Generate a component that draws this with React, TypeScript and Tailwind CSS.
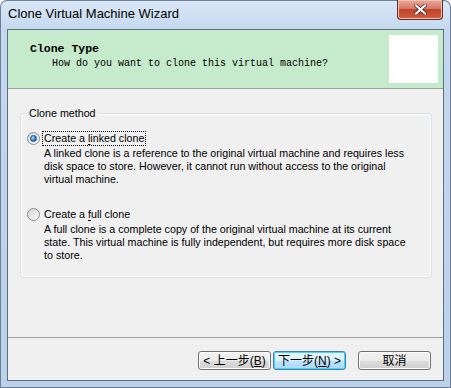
import React from 'react'

const ui = { fontFamily: '"Liberation Sans", "Noto Sans", sans-serif' }
const mono = { fontFamily: '"Liberation Mono", "DejaVu Sans Mono", monospace' }
const cjk = { fontFamily: '"Liberation Sans", "Noto Sans CJK SC", sans-serif' }

const Radio: React.FC<{ checked?: boolean }> = ({ checked }) => (
  <span className="relative flex h-[13px] w-[13px] shrink-0 items-center justify-center rounded-full border border-[#8e8f8f] bg-gradient-to-br from-[#d4d4d4] to-[#fbfbfb]">
    {checked && (
      <span className="h-[7px] w-[7px] rounded-full border border-[#1c4f8c] bg-[radial-gradient(circle_at_35%_35%,#b9e0ff,#2b77c9_60%,#1b4f91)]" />
    )}
  </span>
)

const Option: React.FC<{
  checked?: boolean
  focused?: boolean
  pre: string
  accel: string
  post: string
  lines: string[]
}> = ({ checked, focused, pre, accel, post, lines }) => (
  <div className="flex flex-col">
    <div className="flex items-center">
      <Radio checked={checked} />
      <span
        className={`ml-[2px] h-[15px] px-[1px] leading-[13px] ${
          focused ? 'border border-dotted border-black' : 'border border-transparent'
        }`}
      >
        {pre}
        <span className="underline underline-offset-2">{accel}</span>
        {post}
      </span>
    </div>
    <div className="ml-[17px] mt-[1px] flex flex-col leading-[13px]">
      {lines.map((l) => (
        <span key={l}>{l}</span>
      ))}
    </div>
  </div>
)

const Button: React.FC<{ children: React.ReactNode; primary?: boolean }> = ({
  children,
  primary,
}) => (
  <div
    className={`flex h-[19px] w-[73px] items-center justify-center rounded-[3px] border text-[12px] leading-none ${
      primary
        ? 'border-[#3c7fb1] bg-[linear-gradient(#eaf6fd_0%,#d9f0fc_50%,#bee6fd_50%,#a7d9f5_100%)] shadow-[inset_0_0_0_1px_#48d3fb]'
        : 'border-[#707070] bg-[linear-gradient(#f2f2f2_0%,#ebebeb_50%,#dddddd_50%,#cfcfcf_100%)] shadow-[inset_0_0_0_1px_#fcfcfc]'
    }`}
    style={cjk}
  >
    {children}
  </div>
)

export default function App() {
  return (
    <div
      className="flex h-[388px] w-[451px] flex-col rounded-t-[7px] bg-[linear-gradient(180deg,#dbe8f6_0px,#c4d8ef_30px,#b9d1ea_100%)] shadow-[inset_0_0_0_1px_#6d7f96]"
      style={ui}
    >
      {/* Title bar */}
      <div className="flex h-[29px] items-start px-[8px]">
        <span className="mt-[6px] text-[13px] leading-[16px] text-black">
          Clone Virtual Machine Wizard
        </span>
        <div className="ml-auto flex h-[20px] w-[46px] items-center justify-center rounded-b-[4px] border border-t-0 border-[#5d2a25] bg-[linear-gradient(#e9a99c_0%,#d47a68_45%,#c0442b_50%,#d35b3c_100%)] shadow-[inset_0_0_0_1px_#f3c1b5]">
          <svg width="13" height="11" viewBox="0 0 13 11">
            <path
              d="M2 1.5 L11 9.5 M11 1.5 L2 9.5"
              stroke="#3b2522"
              strokeWidth="3.6"
              strokeLinecap="square"
            />
            <path
              d="M2 1.5 L11 9.5 M11 1.5 L2 9.5"
              stroke="#ffffff"
              strokeWidth="2.2"
              strokeLinecap="square"
            />
          </svg>
        </div>
      </div>

      {/* Client area */}
      <div className="mx-[7px] flex h-[352px] flex-col border border-[#5e6d80] bg-[#f0f0f0]">
        {/* Header */}
        <div className="flex h-[59px] shrink-0 border-b border-[#a0a0a0] bg-[#c6ebcc] pr-[5px] pt-[5px]">
          <div className="flex-1 pl-[22px] pt-[7px]" style={mono}>
            <div className="text-[11.5px] font-bold leading-[14px] text-black">Clone Type</div>
            <div className="pl-[22px] pt-[2px] text-[10px] leading-[12px] text-black">
              How do you want to clone this virtual machine?
            </div>
          </div>
          <div className="h-[48px] w-[49px] bg-white" />
        </div>

        {/* Body */}
        <div className="flex-1 pl-[12px] pr-[11px] pt-[24px] text-[10.7px] text-black">
          <div className="relative h-[165px] rounded-[3px] border border-[#d5dfe5] px-[6px] pt-[17px] shadow-[inset_0_0_0_1px_#ffffff]">
            <span className="absolute -top-[8px] left-[6px] bg-[#f0f0f0] px-[2px] leading-[14px]">
              Clone method
            </span>
            <div className="flex flex-col gap-[21px]">
              <Option
                checked
                focused
                pre="Create a "
                accel="l"
                post="inked clone"
                lines={[
                  'A linked clone is a reference to the original virtual machine and requires less',
                  'disk space to store. However, it cannot run without access to the original',
                  'virtual machine.',
                ]}
              />
              <Option
                pre="Create a "
                accel="f"
                post="ull clone"
                lines={[
                  'A full clone is a complete copy of the original virtual machine at its current',
                  'state. This virtual machine is fully independent, but requires more disk space',
                  'to store.',
                ]}
              />
            </div>
          </div>
        </div>

        {/* Footer */}
        <div className="h-[43px] shrink-0 border-t border-[#a0a0a0] pl-[190px] pt-[13px]">
          <div className="flex items-center">
            <Button>&lt; 上一步(<span className="underline">B</span>)</Button>
            <div className="w-[2px]" />
            <Button primary>
              下一步(<span className="underline">N</span>) &gt;
            </Button>
            <div className="w-[12px]" />
            <Button>取消</Button>
          </div>
        </div>
      </div>
    </div>
  )
}
